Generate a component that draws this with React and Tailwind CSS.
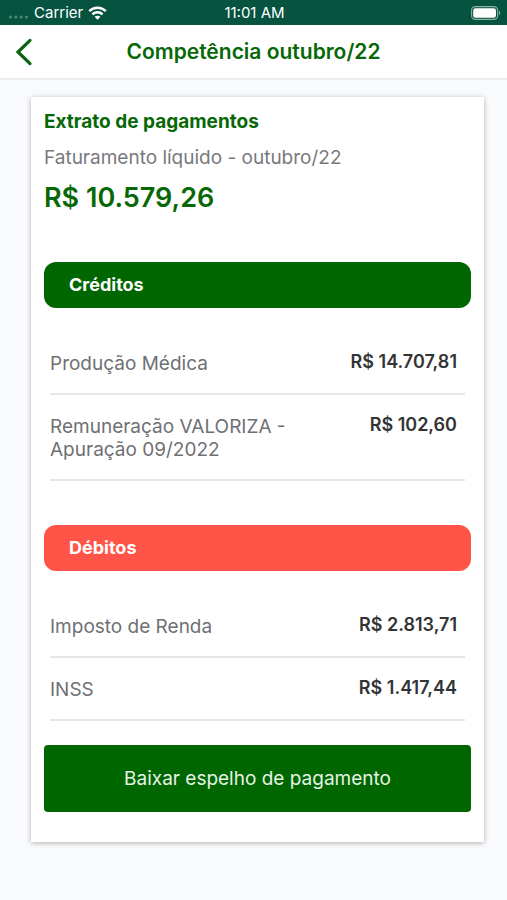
import React from "react";

const credits = [
  { label: "Produção Médica", value: "R$ 14.707,81" },
  { label: "Remuneração VALORIZA - Apuração 09/2022", value: "R$ 102,60" },
];

const debits = [
  { label: "Imposto de Renda", value: "R$ 2.813,71" },
  { label: "INSS", value: "R$ 1.417,44" },
];

const StatusBar = () => (
  <div className="grid grid-cols-3 items-center h-[25px] pl-2 pr-[6px] bg-[#06543f] text-white text-[15px] leading-[25px]">
    <div className="flex items-center gap-[5px]">
      <svg width="21" height="4" viewBox="0 0 20 4" fill="#4b8472" className="mt-2">
        <circle cx="2" cy="2" r="1.6" />
        <circle cx="7.3" cy="2" r="1.6" />
        <circle cx="12.6" cy="2" r="1.6" />
        <circle cx="17.9" cy="2" r="1.6" />
      </svg>
      <span>Carrier</span>
      <svg width="19" height="14" viewBox="0 0 19 14" fill="none" stroke="#fff" strokeWidth="2.4">
        <path d="M1.2 5.2C5.8 0.6 13.2 0.6 17.8 5.2" />
        <path d="M4.4 8.4C7.2 5.6 11.8 5.6 14.6 8.4" />
        <path d="M9.5 13.8L6.6 10.8C8.2 9.3 10.8 9.3 12.4 10.8Z" fill="#fff" stroke="none" />
      </svg>
    </div>
    <span className="text-center">11:01 AM</span>
    <div className="flex justify-end">
      <svg width="30" height="14" viewBox="0 0 30 14">
        <rect x="0.6" y="0.6" width="26" height="12.8" rx="3.6" fill="none" stroke="#8db3a7" strokeWidth="1.1" />
        <rect x="2.2" y="2.2" width="22.8" height="9.6" rx="2.2" fill="#fff" />
        <path d="M28 4.8C29.6 5.4 29.6 8.6 28 9.2Z" fill="#8db3a7" />
      </svg>
    </div>
  </div>
);

const Header = () => (
  <header className="grid grid-cols-[48px_1fr_48px] items-center h-[55px] bg-white border-b-2 border-[#ebecee]">
    <button type="button" aria-label="Voltar" className="flex justify-center">
      <svg width="18" height="28" viewBox="0 0 18 28" fill="none" stroke="#0a6410" strokeWidth="3.2">
        <path d="M15 2.4L3 14L15 25.6" strokeLinecap="round" strokeLinejoin="miter" />
      </svg>
    </button>
    <h1 className="text-center text-[21px] leading-[24px] font-semibold text-[#066806]">
      Competência outubro/22
    </h1>
  </header>
);

const Section = ({ title, items, color }) => (
  <section>
    <h3
      className={`flex items-center h-[46px] px-[25px] rounded-xl text-lg font-bold text-white ${color}`}
    >
      {title}
    </h3>
    <ul className="mt-6 mx-[6px]">
      {items.map((item) => (
        <li
          key={item.label}
          className="flex justify-between pt-5 pb-[18px] pr-2 border-b-2 border-[#e6e6e6]"
        >
          <span className="max-w-[248px] text-[19px] leading-[23px] text-[#6f7074]">
            {item.label}
          </span>
          <span className="text-lg leading-[20px] font-semibold text-[#333436] whitespace-nowrap">
            {item.value}
          </span>
        </li>
      ))}
    </ul>
  </section>
);

const App = () => {
  return (
    <div className="min-h-screen bg-[#f9fafc] font-['Inter','Liberation_Sans',sans-serif]">
      <StatusBar />
      <Header />

      <main className="pt-[17px] pb-14 pl-[31px] pr-[23px]">
        <div className="px-[13px] pt-[13px] pb-[30px] bg-white shadow-[0_1px_5px_rgba(0,0,0,0.3)]">
          <h2 className="text-[19px] leading-[23px] font-bold text-[#066806]">
            Extrato de pagamentos
          </h2>
          <p className="mt-[13px] text-[19px] leading-[23px] text-[#78797d]">
            Faturamento líquido - outubro/22
          </p>
          <p className="mt-3 mb-[47px] text-[27px] leading-[34px] font-semibold text-[#066806]">
            R$ 10.579,26
          </p>

          <div className="flex flex-col gap-11">
            <Section title="Créditos" items={credits} color="bg-[#006600]" />
            <Section title="Débitos" items={debits} color="bg-[#ff5447]" />
          </div>

          <button
            type="button"
            className="mt-6 pt-[2px] w-full h-[67px] rounded-[4px] bg-[#006600] text-[19px] text-[#e6f3e6]"
          >
            Baixar espelho de pagamento
          </button>
        </div>
      </main>
    </div>
  );
};

export default App;
